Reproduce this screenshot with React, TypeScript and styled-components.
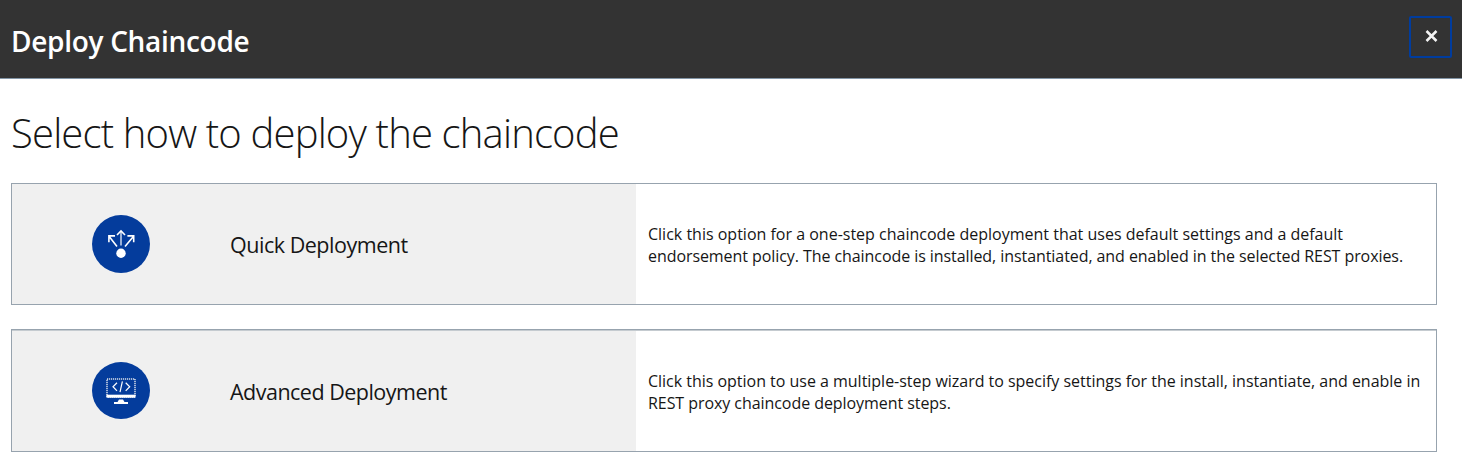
import React from "react";
import styled, { createGlobalStyle } from "styled-components";

const GlobalStyle = createGlobalStyle`
  * { box-sizing: border-box; }
  body {
    margin: 0;
    background: #fff;
    color: #161616;
    font-family: "Open Sans", "Noto Sans", sans-serif;
  }
`;

const Dialog = styled.main`
  height: 469px;
  overflow: hidden;
`;

const Header = styled.header`
  display: flex;
  justify-content: space-between;
  align-items: flex-start;
  height: 79px;
  padding: 16px 10px 0 11px;
  background: #333;
  border-bottom: 1px solid #8295a6;
`;

const Title = styled.h1`
  margin: 5px 0 0;
  color: #fff;
  font-size: 28px;
  font-weight: 600;
  line-height: 40px;
  letter-spacing: -0.3px;
  white-space: nowrap;
`;

const CloseButton = styled.button`
  display: flex;
  justify-content: center;
  align-items: center;
  width: 43px;
  height: 42px;
  padding: 0 0 2px 1px;
  background: transparent;
  border: 2px solid #003c9e;
  border-radius: 2px;
`;

const Body = styled.section`
  padding: 24px 25px 0 11px;
`;

const Heading = styled.h2`
  margin: 0;
  height: 80px;
  font-size: 40px;
  font-weight: 300;
  line-height: 60px;
  letter-spacing: -0.83px;
  white-space: nowrap;
`;

const Options = styled.div`
  display: flex;
  flex-direction: column;
  gap: 24px;
`;

const Option = styled.article<{ $shaded?: boolean }>`
  display: flex;
  height: ${(p) => (p.$shaded ? 123 : 122)}px;
  border: 1px solid #97a3ae;
  ${(p) => p.$shaded && "box-shadow: inset 0 1px #c5cbd0;"}
`;

const Choice = styled.div<{ $top?: number }>`
  display: flex;
  align-items: center;
  width: 624px;
  margin-top: ${(p) => p.$top ?? 0}px;
  padding-left: 80px;
  background: #f0f0f0;
`;

const Badge = styled.svg`
  width: 58px;
  height: 58px;
  flex: none;
`;

const Label = styled.span<{ $spacing: number }>`
  margin: 2px 0 0 80px;
  font-size: 21.5px;
  line-height: 30px;
  letter-spacing: ${(p) => p.$spacing}px;
  white-space: nowrap;
`;

const Description = styled.p<{ $top: number }>`
  margin: 0;
  padding: ${(p) => p.$top}px 0 0 12px;
`;

const Line = styled.span<{ $spacing: number }>`
  display: block;
  font-size: 16px;
  line-height: 22px;
  letter-spacing: ${(p) => p.$spacing}px;
  white-space: nowrap;
`;

const ArrowsIcon = () => (
  <Badge viewBox="0 0 58 58">
    <circle cx="29" cy="29" r="29" fill="#043c9c" />
    <g fill="none" stroke="#fff" strokeWidth="1.6">
      <path d="M25 31.5 17.2 21.6M16.9 27.2V20.9H23" />
      <path d="M33 31.5 41.4 21.6M35.4 20.9H41.7V27.2" />
      <path d="M25 20 29 16 33 20" />
      <path d="M29 17V30.5" strokeOpacity=".75" />
    </g>
    <circle cx="29" cy="38.3" r="4.7" fill="#fff" />
  </Badge>
);

const MonitorIcon = () => (
  <Badge viewBox="0 0 58 58">
    <ellipse cx="29" cy="28.5" rx="29" ry="28.5" fill="#043c9c" />
    <rect x="15" y="17" width="28" height="18" fill="none" stroke="#d5dce8" strokeWidth="1.5" strokeDasharray="1.2 .8" />
    <path d="M14.5 32.7H43.5V35.7H14.5Z" fill="#fff" />
    <path d="M25 20.8 21 24.7 25 28.8M33.7 20.8 37.7 24.7 33.7 28.8M30.4 19.3 28 30.2" fill="none" stroke="#fff" strokeWidth="1.2" />
    <path d="M27 37.5H31L32.5 40H36V42H22V40H25.5Z" fill="#fff" />
  </Badge>
);

export default function App() {
  return (
    <Dialog>
      <GlobalStyle />
      <Header>
        <Title>Deploy Chaincode</Title>
        <CloseButton aria-label="Close">
          <svg width="13" height="12" viewBox="0 0 13 12">
            <path d="M1.5 1 11.5 11M11.5 1 1.5 11" stroke="#f4f4f4" strokeWidth="2.5" />
          </svg>
        </CloseButton>
      </Header>
      <Body>
        <Heading>Select how to deploy the chaincode</Heading>
        <Options>
          <Option>
            <Choice>
              <ArrowsIcon />
              <Label $spacing={-0.48}>Quick Deployment</Label>
            </Choice>
            <Description $top={39}>
              <Line $spacing={0}>Click this option for a one-step chaincode deployment that uses default settings and a default</Line>
              <Line $spacing={-0.07}>endorsement policy. The chaincode is installed, instantiated, and enabled in the selected REST proxies.</Line>
            </Description>
          </Option>
          <Option $shaded>
            <Choice $top={1}>
              <MonitorIcon />
              <Label $spacing={-0.51}>Advanced Deployment</Label>
            </Choice>
            <Description $top={40}>
              <Line $spacing={-0.02}>Click this option to use a multiple-step wizard to specify settings for the install, instantiate, and enable in</Line>
              <Line $spacing={-0.06}>REST proxy chaincode deployment steps.</Line>
            </Description>
          </Option>
        </Options>
      </Body>
    </Dialog>
  );
}
